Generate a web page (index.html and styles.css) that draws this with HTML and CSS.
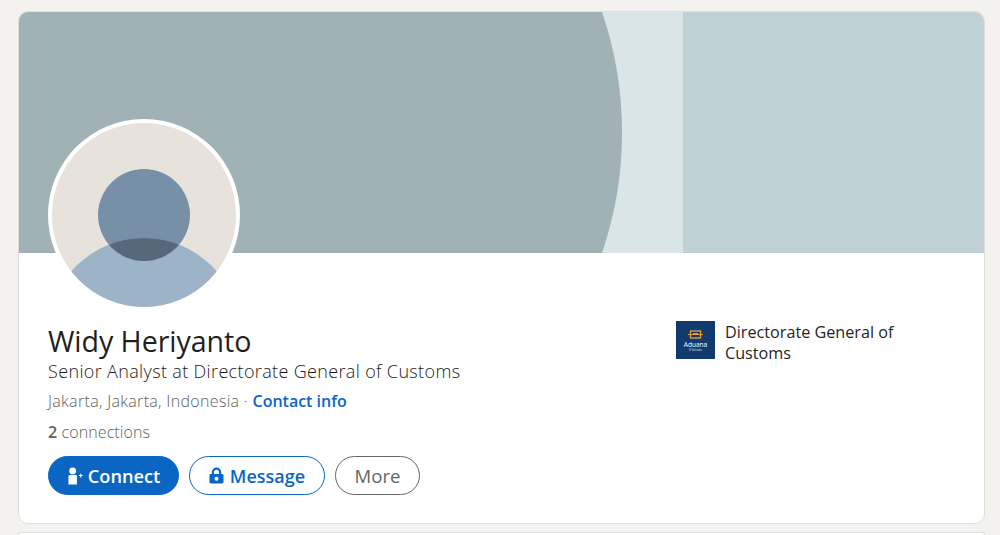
FILE: index.html
```html
<!DOCTYPE html>
<html lang="en">
<head>
<meta charset="utf-8">
<title>Widy Heriyanto</title>
<link rel="stylesheet" href="styles.css">
</head>
<body>
<main class="page">
  <section class="card">
    <div class="banner">
      <svg class="banner-art" viewBox="0 0 965 241" preserveAspectRatio="none" aria-hidden="true">
        <rect width="965" height="241" fill="#bfd1d5"/>
        <rect width="664" height="241" fill="#dae5e7"/>
        <path d="M0 0H583A373 373 0 0 1 583 241H0Z" fill="#a0b2b6"/>
      </svg>
    </div>
    <div class="avatar">
      <svg viewBox="0 0 192 192" width="192" height="192" aria-hidden="true">
        <defs>
          <clipPath id="face"><circle cx="96" cy="96" r="92"/></clipPath>
          <clipPath id="head"><circle cx="96" cy="96" r="46"/></clipPath>
        </defs>
        <circle cx="96" cy="96" r="96" fill="#fff"/>
        <circle cx="96" cy="96" r="92" fill="#e7e2dc"/>
        <circle cx="96" cy="96" r="46" fill="#788fa8"/>
        <g clip-path="url(#face)">
          <circle cx="96" cy="215" r="96" fill="#9db3c8"/>
        </g>
        <g clip-path="url(#head)">
          <circle cx="96" cy="215" r="96" fill="#56687a"/>
        </g>
      </svg>
    </div>
    <div class="details">
      <div class="identity">
        <h1 class="name">Widy Heriyanto</h1>
        <p class="headline">Senior Analyst at Directorate General of Customs</p>
        <p class="location">Jakarta, Jakarta, Indonesia <span class="dot">·</span> <a class="contact" href="#">Contact info</a></p>
        <p class="connections"><b>2</b> connections</p>
        <div class="actions">
          <button class="btn btn-primary" type="button">
            <svg class="btn-icon" viewBox="0 0 18 20" width="17" height="20" aria-hidden="true">
              <circle cx="6" cy="4.6" r="3.6" fill="currentColor"/>
              <path d="M1.5 10.5A1.5 1.5 0 0 1 3 9H9a1.5 1.5 0 0 1 1.5 1.5V19H1.5Z" fill="currentColor"/>
              <path d="M12.5 9.5h4M14.5 7.5v4" stroke="currentColor" stroke-width="1.2" fill="none"/>
            </svg>
            Connect
          </button>
          <button class="btn btn-outline" type="button">
            <svg class="btn-icon" viewBox="0 0 16 18" width="15" height="17" aria-hidden="true">
              <path fill-rule="evenodd" fill="currentColor" d="M8 0.5A5 5 0 0 1 13 5.5V7.5H14A1.5 1.5 0 0 1 15.5 9V16A1.5 1.5 0 0 1 14 17.5H2A1.5 1.5 0 0 1 0.5 16V9A1.5 1.5 0 0 1 2 7.5H3V5.5A5 5 0 0 1 8 0.5ZM8 2.8A2.7 2.7 0 0 0 5.3 5.5V7.5H10.7V5.5A2.7 2.7 0 0 0 8 2.8ZM8 10.3A2.1 2.1 0 1 0 8 14.5A2.1 2.1 0 1 0 8 10.3Z"/>
            </svg>
            Message
          </button>
          <button class="btn btn-muted" type="button">More</button>
        </div>
      </div>
      <div class="company">
        <svg class="company-logo" viewBox="0 0 39 38" width="39" height="38" aria-hidden="true">
          <rect width="39" height="38" fill="#123a6e"/>
          <rect x="14.5" y="10" width="10" height="7" fill="none" stroke="#e09a35" stroke-width="1.4"/>
          <path d="M12 13.5H27M17 12.5H22" stroke="#e09a35" stroke-width="1.2"/>
          <text class="logo-word" x="19.5" y="25.5" text-anchor="middle">Aduana</text>
          <text class="logo-sub" x="19.5" y="29.5" text-anchor="middle">El Salvador</text>
        </svg>
        <span class="company-name">Directorate General of Customs</span>
      </div>
    </div>
  </section>
  <section class="next-card"></section>
</main>
</body>
</html>
```
FILE: styles.css
```css
* { box-sizing: border-box; }
html, body { margin: 0; height: 100%; overflow: hidden; }
body {
  background: #f4f2ee;
  font-family: "Open Sans", "Noto Sans", "Liberation Sans", sans-serif;
  color: #1f1f1f;
}
.page {
  display: flex;
  flex-direction: column;
  gap: 8px;
  height: 535px;
  overflow: hidden;
  padding: 11px 15px 0 18px;
}
.card, .next-card {
  flex: none;
  background: #fff;
  border: 1px solid #dfdeda;
  border-radius: 10px;
  overflow: hidden;
}
.card { position: relative; height: 513px; }
.next-card { height: 3px; border-bottom: 0; border-radius: 10px 10px 0 0; }
.banner { height: 241px; }
.banner-art { display: block; width: 100%; height: 100%; }
.avatar {
  position: absolute;
  left: 29px;
  top: 107px;
  width: 192px;
  height: 192px;
}
.avatar svg { display: block; }
.details {
  display: flex;
  justify-content: space-between;
  padding: 70px 90px 0 29px;
}
.identity { display: flex; flex-direction: column; }
.name {
  margin: 0;
  font-size: 28.6px;
  line-height: 36px;
  font-weight: 500;
  letter-spacing: -0.05px;
}
.headline {
  margin: 0;
  font-size: 18px;
  line-height: 24px;
  font-weight: 300;
  letter-spacing: 0.35px;
  color: #1a1a1a;
}
.location {
  margin: 7px 0 0;
  font-size: 16px;
  line-height: 22px;
  font-weight: 300;
  letter-spacing: 0.32px;
  color: #5f5f5f;
}
.contact { color: #0a66c2; font-weight: 600; letter-spacing: 0; text-decoration: none; }
.connections {
  margin: 9px 0 0;
  font-size: 16px;
  line-height: 22px;
  font-weight: 300;
  letter-spacing: 0.1px;
  color: #5f5f5f;
}
.connections b { font-weight: 600; }
.actions { display: flex; gap: 10px; margin-top: 13px; }
.btn {
  display: inline-flex;
  align-items: center;
  justify-content: center;
  gap: 4px;
  height: 39px;
  border-radius: 20px;
  font-family: inherit;
  font-size: 18.6px;
  font-weight: 500;
  background: #fff;
  padding: 0;
}
.btn-icon { flex: none; }
.btn-primary { width: 131px; background: #0a66c2; border: 1px solid #0a66c2; color: #fff; font-weight: 600; font-size: 18.2px; }
.btn-outline { width: 136px; gap: 6px; border: 1px solid #0a66c2; color: #0a66c2; font-weight: 600; font-size: 18px; }
.btn-muted { width: 85px; border: 1px solid #666; color: #666; }
.company {
  display: flex;
  align-items: flex-start;
  gap: 10px;
  width: 218px;
  margin-top: -2px;
}
.company-logo { flex: none; }
.logo-word { font-size: 6.5px; fill: #fff; }
.logo-sub { font-size: 2.6px; fill: #dfe6ee; }
.company-name {
  font-size: 16.2px;
  line-height: 21px;
  font-weight: 500;
  color: #1f1f1f;
  margin-top: 1px;
}
```
